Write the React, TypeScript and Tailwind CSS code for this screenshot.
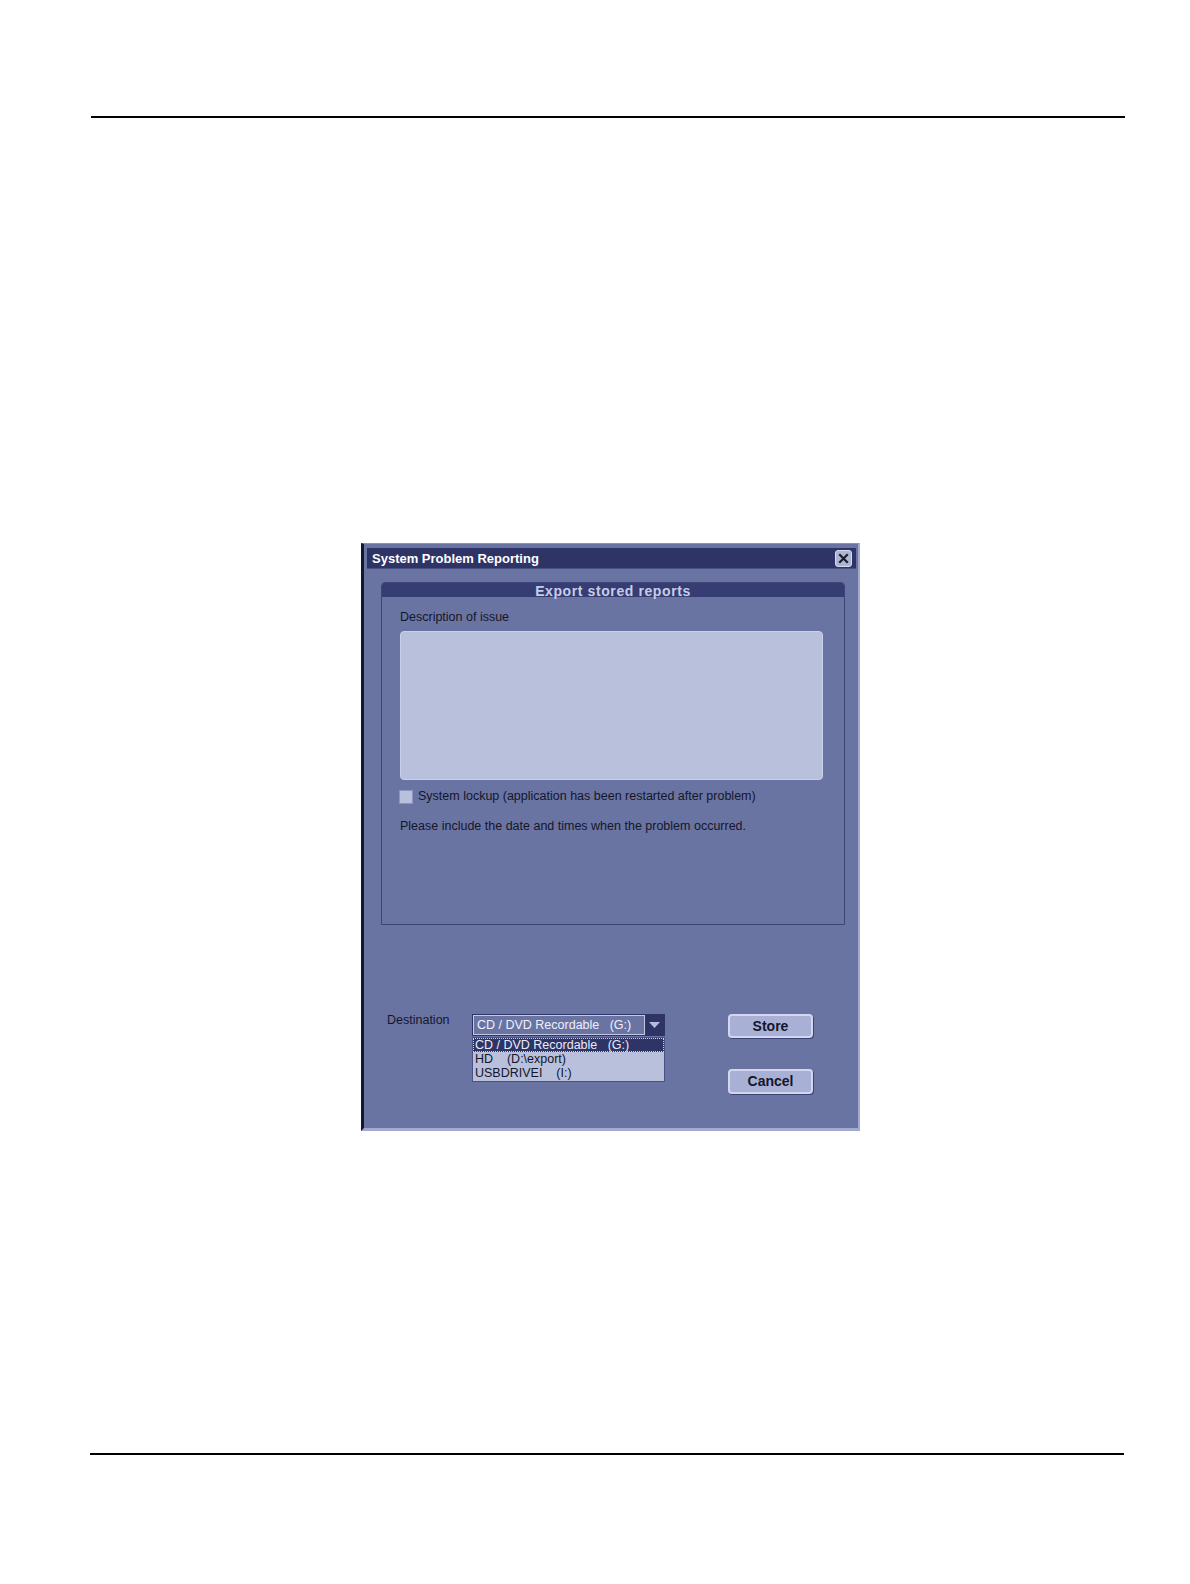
import React from "react";

const font = { fontFamily: '"Liberation Sans", Arial, sans-serif' };

export default function App() {
  return (
    <div className="w-full bg-white flex flex-col pb-[100px]" style={font}>
      <div className="mt-[116px] ml-[91px] w-[1034px] h-[2px] bg-black" />

      {/* Dialog */}
      <div className="mt-[425px] ml-[361px] w-[499px] h-[588px] flex flex-col bg-[#6a74a2] border-l-[3px] border-l-[#15182c] border-t border-t-[#8a92bc] border-r-2 border-r-[#a3aad0] border-b-[3px] border-b-[#a3aad0]">
        {/* title bar */}
        <div className="mt-[4px] ml-[3px] mr-[2px] h-[21px] bg-[#2e3466] flex items-center justify-between pl-[5px] pr-[4px] border-b border-[#4a5284]">
          <span className="text-white font-bold text-[13px] leading-none">System Problem Reporting</span>
          <div className="w-[17px] h-[17px] rounded-[3px] bg-[#aeb4d4] border border-[#d6dbef] flex items-center justify-center">
            <svg width="11" height="11" viewBox="0 0 11 11">
              <path d="M2 2 L9 9 M9 2 L2 9" stroke="#1a1c30" strokeWidth="2.2" strokeLinecap="square" />
            </svg>
          </div>
        </div>

        {/* group box */}
        <div className="mt-[13px] ml-[17px] w-[464px] h-[343px] border border-[#3d4478] rounded-t-[4px] flex flex-col">
          <div className="h-[14px] bg-[#363d72] rounded-t-[3px] flex items-start justify-center">
            <span className="text-[#c6cdea] font-bold text-[14px] leading-none tracking-[0.6px] mt-[1px]">Export stored reports</span>
          </div>
          <div className="pl-[18px] pt-[14px] flex flex-col">
            <span className="text-[12.5px] leading-none text-[#14162a]">Description of issue</span>
            <div className="mt-[7px] w-[423px] h-[149px] rounded-[4px] bg-[#b8c0dc] border border-[#c8cfe8]" />
            <div className="mt-[10px] flex items-center">
              <div className="w-[14px] h-[14px] bg-[#b8c0dc] border border-[#8e96c0] -ml-[1px]" />
              <span className="ml-[5px] text-[12.5px] leading-none text-[#14162a]">System lockup (application has been restarted after problem)</span>
            </div>
            <span className="mt-[16px] text-[12.5px] leading-none text-[#14162a]">Please include the date and times when the problem occurred.</span>
          </div>
        </div>

        {/* bottom area */}
        <div className="mt-[89px] flex">
          <span className="ml-[23px] w-[85px] text-[12.5px] leading-none text-[#14162a]">Destination</span>
          <div className="flex flex-col w-[193px]">
            <div className="h-[22px] flex bg-[#2e3466] p-[1px]">
              <div className="flex-1 bg-[#6a74a2] border border-[#c4cae6] flex items-center pl-[3px]">
                <span className="text-[12.5px] leading-none text-[#eef0fa] whitespace-pre">CD / DVD Recordable   (G:)</span>
              </div>
              <div className="w-[19px] flex items-center justify-center">
                <svg width="11" height="7" viewBox="0 0 11 7">
                  <path d="M0 0 L11 0 L5.5 6 Z" fill="#b4bbdb" />
                </svg>
              </div>
            </div>
            <div className="mt-[1px] h-[45px] bg-[#b8c0dc] border border-[#4a5284] flex flex-col">
              <div className="h-[14px] bg-[#2e3466] border border-dotted border-[#c8cfe8] flex items-center pl-[1px]">
                <span className="text-[12.5px] leading-none text-[#e8ebf7] whitespace-pre">CD / DVD Recordable   (G:)</span>
              </div>
              <div className="h-[14px] flex items-center pl-[2px]">
                <span className="text-[12.5px] leading-none text-[#14162a] whitespace-pre">HD    (D:\export)</span>
              </div>
              <div className="h-[14px] flex items-center pl-[2px]">
                <span className="text-[12.5px] leading-none text-[#14162a] whitespace-pre">USBDRIVEI    (I:)</span>
              </div>
            </div>
          </div>
          <div className="ml-[63px] flex flex-col">
            <button className="w-[85px] h-[24px] rounded-[4px] bg-[#a9b0d6] border-2 border-[#d2d7ee] shadow-[1px_1px_0_#3d4478] flex items-center justify-center font-bold text-[14px] text-[#14162a]">Store</button>
            <button className="mt-[31px] w-[85px] h-[25px] rounded-[4px] bg-[#a9b0d6] border-2 border-[#d2d7ee] shadow-[1px_1px_0_#3d4478] flex items-center justify-center font-bold text-[14px] text-[#14162a]">Cancel</button>
          </div>
        </div>
      </div>

      <div className="mt-[322px] ml-[90px] w-[1034px] h-[2px] bg-black" />
    </div>
  );
}
